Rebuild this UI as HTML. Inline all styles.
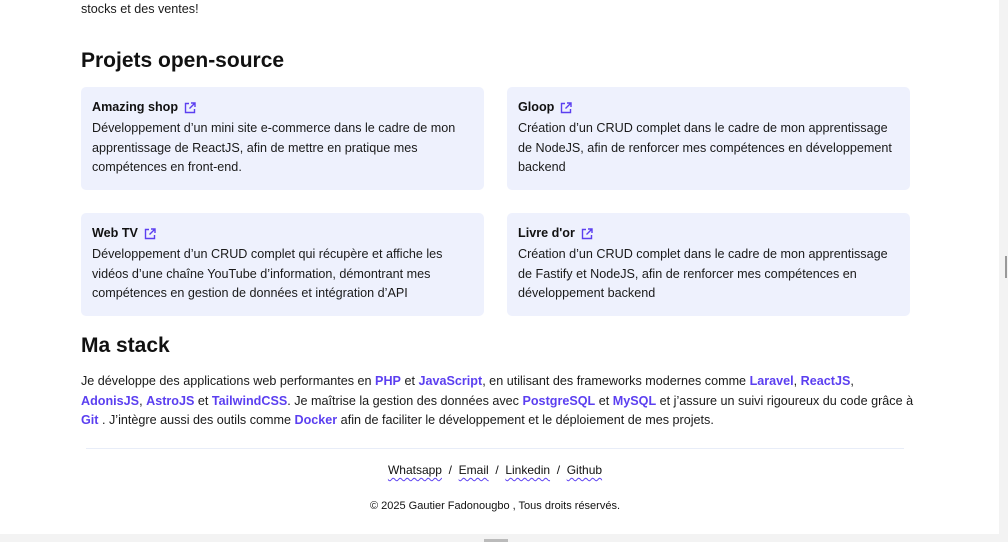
<!DOCTYPE html>
<html><head><meta charset="utf-8"><style>
*{margin:0;padding:0;box-sizing:border-box}
body{width:1008px;height:542px;overflow:hidden;background:#fff;font-family:"Liberation Sans",sans-serif;color:#111;position:relative;font-size:13px}
.a{position:absolute}
.t{line-height:19.5px;font-size:12.6px;color:#1a1a1a}
h2{position:absolute;font-size:21px;font-weight:bold;color:#111}
.card{position:absolute;background:#eef1fd;border-radius:5px;width:403px;height:103px;padding:12px 11px}
.card b{font-size:12.6px;display:flex;align-items:center;gap:6px;line-height:17px;margin-bottom:3px}
.card p{line-height:19.5px;font-size:12.6px;color:#1a1a1a}
.k{color:#5b3ff0;font-weight:bold}
u{text-decoration:underline wavy #5b3ff0;text-underline-offset:3px;text-decoration-thickness:1px}
</style></head><body>
<div class="a t" style="left:81px;top:0px">stocks et des ventes!</div>
<h2 style="left:81px;top:49px">Projets open-source</h2>
<div class="card" style="left:81px;top:87px"><b>Amazing shop <svg width="12" height="12" viewBox="0 0 12 12" fill="none" stroke="#5b3ff0" stroke-width="1.4"><path d="M5 1.5H1.5v9h9V7M7 1h4v4M11 1L5.5 6.5"/></svg></b><p>Développement d’un mini site e-commerce dans le cadre de mon apprentissage de ReactJS, afin de mettre en pratique mes compétences en front-end.</p></div>
<div class="card" style="left:507px;top:87px"><b>Gloop <svg width="12" height="12" viewBox="0 0 12 12" fill="none" stroke="#5b3ff0" stroke-width="1.4"><path d="M5 1.5H1.5v9h9V7M7 1h4v4M11 1L5.5 6.5"/></svg></b><p>Création d’un CRUD complet dans le cadre de mon apprentissage de NodeJS, afin de renforcer mes compétences en développement backend</p></div>
<div class="card" style="left:81px;top:213px"><b>Web TV <svg width="12" height="12" viewBox="0 0 12 12" fill="none" stroke="#5b3ff0" stroke-width="1.4"><path d="M5 1.5H1.5v9h9V7M7 1h4v4M11 1L5.5 6.5"/></svg></b><p>Développement d’un CRUD complet qui récupère et affiche les vidéos d’une chaîne YouTube d’information, démontrant mes compétences en gestion de données et intégration d’API</p></div>
<div class="card" style="left:507px;top:213px"><b>Livre d'or <svg width="12" height="12" viewBox="0 0 12 12" fill="none" stroke="#5b3ff0" stroke-width="1.4"><path d="M5 1.5H1.5v9h9V7M7 1h4v4M11 1L5.5 6.5"/></svg></b><p>Création d’un CRUD complet dans le cadre de mon apprentissage de Fastify et NodeJS, afin de renforcer mes compétences en développement backend</p></div>
<h2 style="left:81px;top:334px">Ma stack</h2>
<div class="a t" style="left:81px;top:372px;width:845px">Je développe des applications web performantes en <span class="k">PHP</span> et <span class="k">JavaScript</span>, en utilisant des frameworks modernes comme <span class="k">Laravel</span>, <span class="k">ReactJS</span>,<br><span class="k">AdonisJS</span>, <span class="k">AstroJS</span> et <span class="k">TailwindCSS</span>. Je maîtrise la gestion des données avec <span class="k">PostgreSQL</span> et <span class="k">MySQL</span> et j’assure un suivi rigoureux du code grâce à<br><span class="k">Git</span> . J’intègre aussi des outils comme <span class="k">Docker</span> afin de faciliter le développement et le déploiement de mes projets.</div>
<div class="a" style="left:86px;top:448px;width:818px;height:1px;background:#e8edf8"></div>
<div class="a" style="left:0;width:990px;top:463px;text-align:center;font-size:12px;color:#111"><u>Whatsapp</u> &nbsp;/&nbsp; <u>Email</u> &nbsp;/&nbsp; <u>Linkedin</u> &nbsp;/&nbsp; <u>Github</u></div>
<div class="a" style="left:0;width:990px;top:500px;text-align:center;font-size:11px;color:#111">© 2025 Gautier Fadonougbo , Tous droits réservés.</div>
<div class="a" style="left:999px;top:0;width:9px;height:542px;background:#f3f3f3"></div>
<div class="a" style="left:1005px;top:256px;width:2px;height:22px;background:#999"></div>
<div class="a" style="left:0;top:534px;width:1008px;height:8px;background:#f3f3f3"></div>
<div class="a" style="left:484px;top:539px;width:24px;height:3px;background:#bbb"></div>
</body></html>
